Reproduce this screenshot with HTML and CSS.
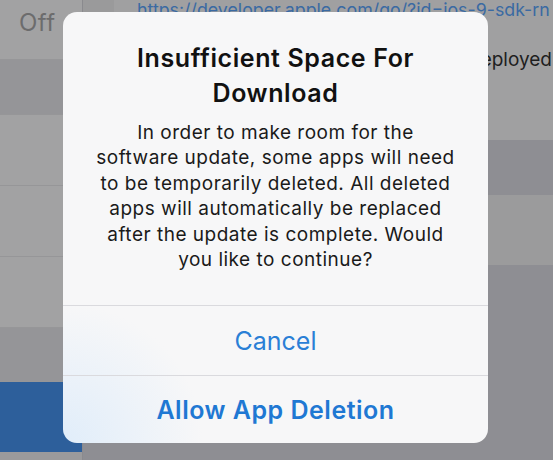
FILE: index.html
```html
<!DOCTYPE html>
<html>
<head>
<meta charset="utf-8">
<link rel="stylesheet" href="styles.css">
</head>
<body>
<div class="screen">
  <div class="sidebar">
    <div class="row r1"><span class="off">Off</span></div>
    <div class="row r2 dark"></div>
    <div class="row r3"></div>
    <div class="row r3"></div>
    <div class="row r3"></div>
    <div class="row r4 dark"></div>
    <div class="row r5 blue"></div>
    <div class="row r6"></div>
  </div>
  <div class="detail">
    <div class="top">
      <div class="inset"></div>
      <div class="topcontent">
        <div class="link">https://developer.apple.com/go/?id=ios-9-sdk-rn</div>
        <div class="note">deployed</div>
      </div>
    </div>
    <div class="band b1"></div>
    <div class="band b2"></div>
    <div class="band b3"></div>
  </div>
</div>
<div class="alert">
  <div class="alert-body">
    <div class="title">Insufficient Space For<br>Download</div>
    <div class="message">In order to make room for the<br>software update, some apps will need<br>to be temporarily deleted. All deleted<br>apps will automatically be replaced<br>after the update is complete. Would<br>you like to continue?</div>
  </div>
  <div class="btn cancel">Cancel</div>
  <div class="btn allow">Allow App Deletion</div>
</div>
</body>
</html>
```
FILE: styles.css
```css
html, body {
  margin: 0;
  padding: 0;
}
body {
  width: 553px;
  height: 460px;
  overflow: hidden;
  position: relative;
  background: #8e8e93;
  font-family: Inter, "Liberation Sans", sans-serif;
}
.screen {
  display: flex;
  height: 460px;
}
.sidebar {
  flex: 0 0 82px;
  display: flex;
  flex-direction: column;
}
.row {
  box-sizing: border-box;
  background: #a2a2a3;
  border-bottom: 1px solid #969698;
}
.row.dark { background: #959598; }
.row.blue { background: #2d5f9b; border-bottom: none; }
.r1 { height: 60px; padding: 8px 0 0 19px; }
.r2 { height: 55px; }
.r3 { height: 71px; }
.r4 { height: 54px; }
.r5 { height: 70px; }
.r6 { height: 8px; background: #9a9a9c; border: none; }
.off {
  font-size: 24px;
  color: #6c6c6d;
  line-height: 30px;
  letter-spacing: 0.5px;
}
.detail {
  flex: 1;
  min-width: 0;
  display: flex;
  flex-direction: column;
  border-left: 1px solid #8a8a8e;
}
.top {
  height: 140px;
  display: flex;
  background: #a0a0a1;
}
.inset {
  flex: 0 0 31px;
  height: 40px;
  background: #9a9a9b;
}
.topcontent {
  flex: 1;
  min-width: 0;
  padding-left: 23px;
  overflow: hidden;
}
.link {
  font-size: 17.8px;
  color: #3a6aa3;
  white-space: nowrap;
  line-height: 24px;
  margin-top: -2px;
}
.note {
  font-size: 19px;
  color: #1e1e1e;
  white-space: nowrap;
  text-align: right;
  line-height: 24px;
  margin-top: 26px;
  padding-right: 1px;
}
.band { background: #8e8e93; }
.b1 { height: 55px; }
.b2 { height: 70px; background: #9b9b9c; }
.b3 { flex: 1; }

.alert {
  position: absolute;
  left: 63px;
  top: 12px;
  width: 425px;
  height: 431px;
  border-radius: 14px;
  overflow: hidden;
  background:
    radial-gradient(circle at 0 100%, rgba(222, 236, 250, 0.9), rgba(240, 246, 252, 0) 140px),
    #f7f7f8;
  display: flex;
  flex-direction: column;
  text-align: center;
}
.alert-body {
  box-sizing: border-box;
  height: 293px;
  padding-top: 29px;
}
.title {
  font-size: 25px;
  font-weight: 600;
  line-height: 35px;
  letter-spacing: 0.6px;
  color: #111;
}
.message {
  margin-top: 9px;
  font-size: 19px;
  line-height: 25.4px;
  letter-spacing: 0.5px;
  color: #1a1a1a;
  white-space: nowrap;
}
.btn {
  box-sizing: border-box;
  border-top: 1px solid #dadade;
  display: flex;
  align-items: center;
  justify-content: center;
  color: #2a7fd6;
  font-size: 25px;
}
.cancel { height: 70px; }
.allow { flex: 1; font-weight: 600; color: #1f78d3; letter-spacing: 0.5px; }
```
